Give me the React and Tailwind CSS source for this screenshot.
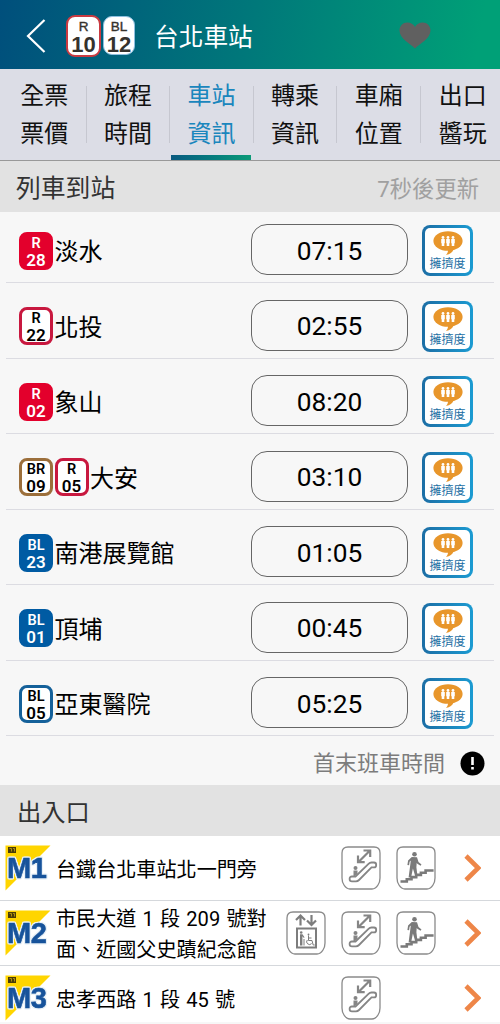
import React from 'react';

const tabs = [
  ['全票', '票價'],
  ['旅程', '時間'],
  ['車站', '資訊'],
  ['轉乘', '資訊'],
  ['車廂', '位置'],
  ['出口', '醬玩'],
];

const badgeStyles = {
  redSolid: 'bg-[#e3002c] border-[#e3002c] text-white',
  red: 'bg-white border-[#c8183f] text-black',
  brown: 'bg-white border-[#9c6f3b] text-black',
  blueSolid: 'bg-[#005ba3] border-[#005ba3] text-white',
  blue: 'bg-white border-[#15619a] text-black',
};

const trains = [
  { name: '淡水', time: '07:15', badges: [['R', '28', 'redSolid']] },
  { name: '北投', time: '02:55', badges: [['R', '22', 'red']] },
  { name: '象山', time: '08:20', badges: [['R', '02', 'redSolid']] },
  { name: '大安', time: '03:10', badges: [['BR', '09', 'brown'], ['R', '05', 'red']] },
  { name: '南港展覽館', time: '01:05', badges: [['BL', '23', 'blueSolid']] },
  { name: '頂埔', time: '00:45', badges: [['BL', '01', 'blueSolid']] },
  { name: '亞東醫院', time: '05:25', badges: [['BL', '05', 'blue']] },
];

const exits = [
  { code: 'M1', lines: ['台鐵台北車站北一門旁'], icons: ['escalator', 'stairs'] },
  { code: 'M2', lines: ['市民大道 1 段 209 號對', '面、近國父史蹟紀念館'], icons: ['elevator', 'escalator', 'stairs'] },
  { code: 'M3', lines: ['忠孝西路 1 段 45 號'], icons: ['escalator', null] },
];

function HeaderBadge({ line, number, className }) {
  return (
    <div className={`flex flex-col items-center rounded-[9px] bg-white font-['Liberation_Sans'] text-[#35322d] ${className}`}>
      <span className="text-[13.500px] leading-[15px] [-webkit-text-stroke:0.4px_#35322d]">{line}</span>
      <span className="mt-px text-[22px] leading-[20px] font-bold">{number}</span>
    </div>
  );
}

function StationBadge({ line, number, variant }) {
  return (
    <div className={`flex h-[38px] w-[34px] flex-col items-center rounded-[8px] border-[3px] font-semibold ${badgeStyles[variant]}`}>
      <span className="mt-px text-[14.500px] leading-[15px]">{line}</span>
      <span className="text-[17px] leading-[18px]">{number}</span>
    </div>
  );
}

function CrowdButton() {
  return (
    <button className="mt-px -mb-px h-[51px] w-[51px] rounded-[8px] bg-linear-to-r from-[#1c6ea5] to-[#1b9bd2] p-[3px]">
      <span className="flex h-full w-full flex-col items-center rounded-[5px] bg-white">
        <svg className="mt-[3px] h-[25px] w-[30px]" viewBox="0 0 30 25">
          <ellipse cx="15" cy="10" rx="14.6" ry="9.8" fill="#e8962b" />
          <path d="M15 18.5h5.5c-1 2.8-3.5 4.6-7.5 5.5 1.5-1.6 2.2-3.4 2-5.5z" fill="#e8962b" />
          <g fill="#fff">
            <circle cx="10" cy="6.500" r="1.400" />
            <path d="M8.200 8h3.600v4.300h-.5v2.700H8.700v-2.700h-.5z" />
            <circle cx="15" cy="6.500" r="1.400" />
            <path d="M13.200 8h3.600v4.300h-.5v2.700h-2.600v-2.700h-.5z" />
            <circle cx="20" cy="6.500" r="1.400" />
            <path d="M18.200 8h3.600v4.300h-.5v2.700h-2.600v-2.700h-.5z" />
          </g>
        </svg>
        <span className="text-[12px] leading-[16px] whitespace-nowrap text-[#1b6ea3]">擁擠度</span>
      </span>
    </button>
  );
}

function IconFrame({ children }) {
  return (
    <svg className="h-[44px] w-[40px]" viewBox="0 0 40 44" fill="none">
      <path
        d="M7 1h26q6 0 6 6v25q0 4-2 7-2.500 4-6 4H9q-3.500 0-6-4-2-3-2-7V7q0-6 6-6z"
        stroke="#8a8a8a"
        strokeWidth="1.300"
      />
      {children}
    </svg>
  );
}

function EscalatorIcon() {
  return (
    <IconFrame>
      <path d="M17.500 16L29 4.500M22.500 4.500h6.700V11M17 9.500v6.700h6.700" stroke="#858585" strokeWidth="2.200" />
      <circle cx="14.500" cy="22" r="2" fill="#858585" />
      <path d="M12.500 24.500h4v3.500l-4 3z" fill="#858585" />
      <path
        d="M11 30.500h3.500L27.500 17.800q1.300-1.300 3-1.300H33q2.200 0 2.200 2.400T33 21.400h-2.500L18 34q-1.300 1.300-3 1.300h-4q-2.400 0-2.400-2.400t2.400-2.400z"
        stroke="#858585"
        strokeWidth="1.800"
      />
    </IconFrame>
  );
}

function StairsIcon() {
  return (
    <IconFrame>
      <circle cx="18.500" cy="8.200" r="2.300" fill="#7a7a7a" />
      <path d="M15.800 11l5.200.2 1.500 4.800 3 2.500-1 1.300-3.500-2.300-.3-.8-.3 4.500 1 8.300h-2.300l-2.200-7-1.800 9h-2.500l1.700-13 .5-4-1.200 1.300-.5 3.500-1.700-.2.700-4.600z" fill="#7a7a7a" />
      <path d="M4.500 35.500h6.300v-2.200h4.700v-2.200h4.700v-2.200h4.700v-2.200h4.700v-2.200h8" stroke="#7a7a7a" strokeWidth="2.600" />
    </IconFrame>
  );
}

function ElevatorIcon() {
  return (
    <IconFrame>
      <path d="M14.500 14.500V5M10 9l4.500-4.500L19 9M25.500 4v9.500M21 9.500l4.500 4.500 4.500-4.500" stroke="#7d7d7d" strokeWidth="2.200" />
      <rect x="11" y="17.500" width="19" height="19" stroke="#7d7d7d" strokeWidth="2" />
      <circle cx="15.200" cy="21.500" r="1.300" fill="#7d7d7d" />
      <path d="M14 23.300h2.500l2 3-.6.600-1.500-1.700V34.500h-2.400z" fill="#7d7d7d" />
      <path d="M18 28v6.500M22.500 24.500v5h3.500l1.200 4.500h1.500M21.300 29a2.700 2.700 0 1 0 4.300 3.500M22.500 27h3" stroke="#7d7d7d" strokeWidth="1" />
      <circle cx="22.500" cy="23.500" r=".9" fill="#7d7d7d" />
    </IconFrame>
  );
}

const facilityIcons = {
  elevator: <ElevatorIcon />,
  escalator: <EscalatorIcon />,
  stairs: <StairsIcon />,
};

function ExitBadge({ code }) {
  return (
    <svg className="h-[46px] w-[46px] shrink-0 overflow-visible" viewBox="0 0 46 46">
      <path d="M0.500 0.500H45.500L0.500 45.500z" fill="#ffd500" />
      <rect x="3" y="2" width="8" height="6" fill="#4a3c08" />
      <path d="M4.500 3.500h2v3M8 3.500h1.500v3" stroke="#d8b510" strokeWidth=".7" fill="none" />
      <text
        x="2"
        y="33.300"
        className="font-['Liberation_Sans'] text-[29px] font-bold tracking-[-0.5px] [filter:drop-shadow(1px_0_0_#e9f1f7)_drop-shadow(-1px_0_0_#e9f1f7)_drop-shadow(0_1px_0_#e9f1f7)_drop-shadow(0_-1px_0_#e9f1f7)]"
        fill="#17539b"
        stroke="#17539b"
        strokeWidth=".6"
      >
        {code}
      </text>
    </svg>
  );
}

function Header() {
  return (
    <header className="flex h-[69px] items-center bg-linear-[100deg] from-[#004f7c] via-[#00787a] to-[#00a077] to-95% pt-[2px] pl-[26px]">
      <svg className="h-[36px] w-[20px]" viewBox="0 0 20 36" fill="none">
        <path d="M18.500 2L2 18l16.500 16" stroke="#fff" strokeWidth="2.200" />
      </svg>
      <div className="ml-5 flex items-center gap-[2px]">
        <HeaderBadge line="R" number="10" className="h-[42px] w-[35px] border-2 border-[#c93a41] pt-[2px]" />
        <HeaderBadge line="BL" number="12" className="h-[39px] w-[32px] border border-[#8fc0e0] pt-[2px]" />
      </div>
      <h1 className="ml-[19px] w-[245px] pt-[5px] text-[24.700px] leading-[36px] text-white">台北車站</h1>
      <svg className="mb-px h-[27px] w-[32px]" viewBox="0 0 32 27">
        <path d="M16 26.500C12 22 .5 17 .5 8.500.5 4 4 .5 8.300.5c3.300 0 6.200 1.500 7.700 4.500C17.500 2 20.400.5 23.700.5 28 .5 31.500 4 31.500 8.500 31.500 17 20 22 16 26.500z" fill="#606060" />
      </svg>
    </header>
  );
}

function Tabs() {
  return (
    <nav className="flex h-[92px] overflow-hidden border-b border-[#999] bg-[#dcdde6] pl-[3px]">
      {tabs.map(([top, bottom], i) => (
        <div key={top + bottom} className="flex w-[83.600px] shrink-0">
          <div className={`flex flex-1 flex-col items-center justify-between ${i === 2 ? 'text-[#1a86bd]' : 'text-[#111]'}`}>
            <div className="flex flex-col pt-2 text-[24px] leading-[38px]">
              <span>{top}</span>
              <span>{bottom}</span>
            </div>
            {i === 2 && <div className="h-[5px] w-[80px] bg-linear-to-r from-[#0a5a80] to-[#0d9a78]" />}
          </div>
          {i < 5 && <div className="mt-[17px] h-[57px] w-px bg-[#c6c7d0]" />}
        </div>
      ))}
    </nav>
  );
}

function App() {
  return (
    <div className="flex h-[1024px] w-[500px] flex-col overflow-hidden bg-[#f7f7f7] font-[Roboto,'Noto_Sans_CJK_TC',sans-serif] text-black">
      <Header />
      <Tabs />

      <div className="flex h-[51px] shrink-0 items-center justify-between bg-[#e2e2e2] pt-[5px] pr-[21px] pl-4">
        <h2 className="text-[24.800px] leading-[36px] text-[#333]">列車到站</h2>
        <span className="text-[22.300px] leading-[36px] text-[#a0a0a0]">7秒後更新</span>
      </div>

      <main className="px-[6px]">
        {trains.map((train) => (
          <div key={train.name} className="flex h-[75.500px] items-end border-b-[1.500px] border-[#dcdce2] pb-[7px] first:h-[71px]">
            <div className="flex h-[51px] w-[245px] items-center gap-[1.500px] pt-[2px] pl-[13px]">
              {train.badges.map(([line, number, variant]) => (
                <StationBadge key={line} line={line} number={number} variant={variant} />
              ))}
              <span className="pt-[3px] text-[24px] leading-[36px]">{train.name}</span>
            </div>
            <div className="mr-[14px] flex h-[51px] w-[157px] items-center justify-center rounded-[16px] border border-[#666] pt-[2px] text-[26.300px] leading-[36px]">
              {train.time}
            </div>
            <CrowdButton />
          </div>
        ))}
      </main>

      <div className="flex h-[49px] shrink-0 items-center justify-end gap-[15px] pt-[5px] pr-[15px]">
        <span className="pt-px text-[22px] leading-[32px] text-[#7c7c7c]">首末班車時間</span>
        <svg className="h-[25px] w-[25px]" viewBox="0 0 25 25">
          <circle cx="12.500" cy="12.500" r="12" fill="#000" />
          <path d="M11.200 6h2.600v8h-2.600zM11.200 16h2.600v2.600h-2.600z" fill="#fff" />
        </svg>
      </div>

      <div className="flex h-[51px] shrink-0 items-center bg-[#e2e2e2] pt-[5px] pl-[17px]">
        <h2 className="text-[24.300px] leading-[36px] text-[#333]">出入口</h2>
      </div>

      <section>
        {exits.map((exit) => (
          <div key={exit.code} className="flex h-[65px] items-center border-b border-[#d5d8dc] bg-white pr-[19px] pl-[5px] last:h-[56px] last:items-start last:border-0 last:pt-[9px]">
            <ExitBadge code={exit.code} />
            <div className="ml-[5px] flex min-h-[46px] flex-1 flex-col justify-center pt-[4px] text-[20.100px] leading-[31px] [word-spacing:1.200px] whitespace-nowrap">
              {exit.lines.map((text) => (
                <span key={text}>{text}</span>
              ))}
            </div>
            <div className="flex gap-[15px]">
              {exit.icons.map((name, i) => (
                <div key={i} className="flex h-[46px] w-[40px] items-center">
                  {name && facilityIcons[name]}
                </div>
              ))}
            </div>
            <div className="flex h-[46px] items-center">
              <svg className="ml-7 h-[28px] w-[17px]" viewBox="0 0 17 28" fill="none">
                <path d="M2 2l12.200 12L2 26" stroke="#ee8648" strokeWidth="4.600" />
              </svg>
            </div>
          </div>
        ))}
      </section>
    </div>
  );
}

export default App;
